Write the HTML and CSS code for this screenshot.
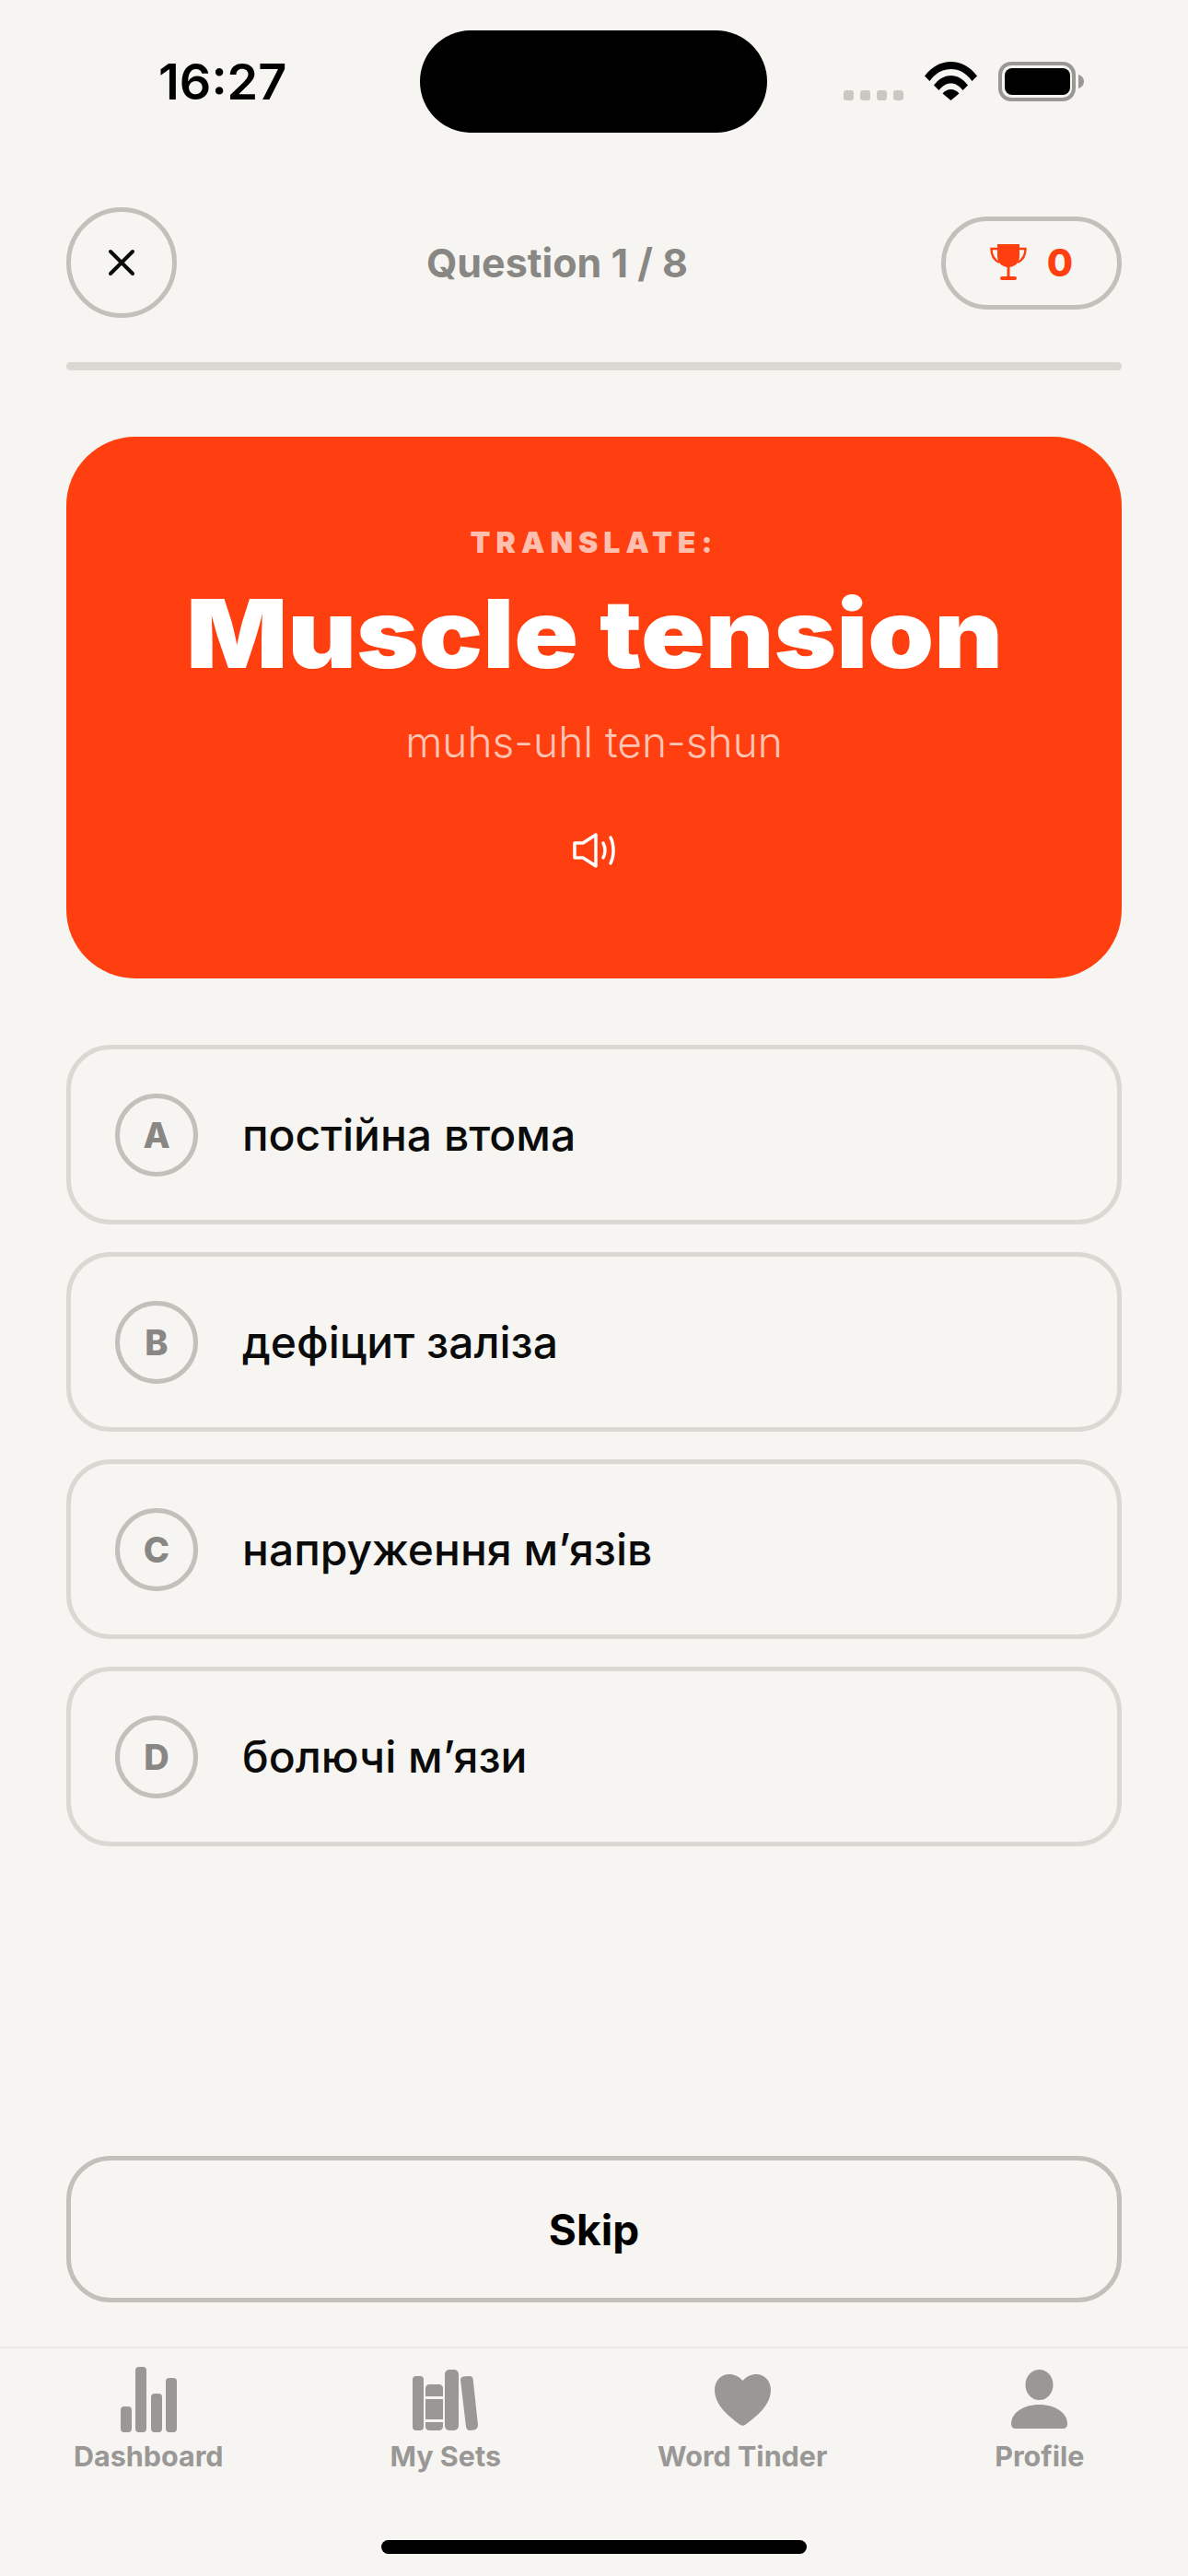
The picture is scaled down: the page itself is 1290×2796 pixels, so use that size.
FILE: index.html
```html
<!DOCTYPE html>
<html lang="uk">
<head>
    <meta charset="UTF-8">
    <meta name="viewport" content="width=device-width, initial-scale=1.0">
    <title>Quiz</title>
    <link rel="stylesheet" href="styles.css">
</head>
<body>
    <div class="page">
        <div class="status-bar">
            <span class="status-time">16:27</span>
            <div class="island"></div>
            <div class="status-icons">
                <div class="cell-dots"><i></i><i></i><i></i><i></i></div>
                <svg class="wifi" width="57" height="42" viewBox="0 0 57 42">
                    <path d="M0 15.5C7.5 5.5 17.5 0 28.5 0S49.500 5.500 57 15.500L51.500 21C45.500 12.500 37.500 8 28.500 8S11.500 12.500 5.500 21Z"/>
                    <path d="M10 25.500C15 19 21.500 15 28.500 15S42 19 47 25.500L41.500 31C37.500 26 33.500 23.500 28.500 23.500S19.500 26 15.500 31Z"/>
                    <path d="M19.500 34.500C22 31.500 25 30 28.500 30S35 31.500 37.500 34.500L28.500 42Z"/>
                </svg>
                <svg class="battery" width="93" height="43" viewBox="0 0 93 43">
                    <rect x="2" y="2" width="80" height="39" rx="12" fill="none" stroke="#999894" stroke-width="4"/>
                    <rect x="7" y="7" width="71" height="29" rx="8"/>
                    <path d="M87 14C90.500 15 93 18 93 21.500S90.500 28 87 29Z" fill="#999894"/>
                </svg>
            </div>
        </div>

        <main class="quiz">
            <div class="quiz-header">
                <button class="close-btn">
                    <svg width="30" height="30" viewBox="0 0 30 30" fill="none" stroke="#0b0b0b" stroke-width="4" stroke-linecap="round">
                        <path d="M3 3L27 27M27 3L3 27"/>
                    </svg>
                </button>
                <span class="question-count">Question 1 / 8</span>
                <div class="score-pill">
                    <svg width="40" height="40" viewBox="0 0 40 40" fill="#ff3f0f">
                        <path d="M8 0H32V13C32 20 27 25 20 25S8 20 8 13Z"/>
                        <path d="M18.500 23H21.500V36H18.500Z"/>
                        <rect x="11" y="35" width="18" height="4" rx="2"/>
                        <path d="M8 5H1.500C1.500 12 4 17 10 20M32 5H38.500C38.500 12 36 17 30 20" fill="none" stroke="#ff3f0f" stroke-width="2.500"/>
                    </svg>
                    <span class="score">0</span>
                </div>
            </div>

            <div class="progress"></div>

            <section class="word-card">
                <div class="word-label">TRANSLATE:</div>
                <h1 class="word-title">Muscle tension</h1>
                <div class="word-phonetic">muhs-uhl ten-shun</div>
                <svg class="speaker" width="46" height="38" viewBox="0 0 46 38" fill="none" stroke="#fff" stroke-width="3.500" stroke-linecap="round" stroke-linejoin="round">
                    <path d="M2 11H11L25 2V36L11 27H2Z"/>
                    <path d="M33 11C35.500 16 35.500 22 33 27"/>
                    <path d="M41 5C45 13 45 25 41 33"/>
                </svg>
            </section>

            <div class="options">
                <div class="option"><span class="option-letter">A</span><span class="option-text">постійна втома</span></div>
                <div class="option"><span class="option-letter">B</span><span class="option-text">дефіцит заліза</span></div>
                <div class="option"><span class="option-letter">C</span><span class="option-text">напруження мʼязів</span></div>
                <div class="option"><span class="option-letter">D</span><span class="option-text">болючі мʼязи</span></div>
            </div>

            <button class="skip-btn">Skip</button>
        </main>

        <nav class="tab-bar">
            <div class="tab">
                <svg width="61" height="71" viewBox="0 0 61 71" fill="#999896">
                    <rect x="0" y="43" width="12" height="28" rx="4"/>
                    <rect x="16" y="0" width="12" height="71" rx="4"/>
                    <rect x="33" y="29" width="12" height="42" rx="4"/>
                    <rect x="49" y="12" width="12" height="59" rx="4"/>
                </svg>
                <span>Dashboard</span>
            </div>
            <div class="tab">
                <svg width="71" height="71" viewBox="0 -3 71 71" fill="#999896">
                    <rect x="0" y="7" width="12" height="59" rx="4"/>
                    <path d="M14 20C14 18 16 16 18 16H29C31 16 33 18 33 20V29H14ZM14 32H33V54H14ZM14 57H33V62C33 64 31 66 29 66H18C16 66 14 64 14 62Z"/>
                    <rect x="35" y="0" width="15" height="66" rx="5"/>
                    <path d="M52 11C52 9 53.500 8 55 7.500L62 7C64 7 65.500 8.500 65.600 10L71 60C71 63 69.500 65 67 65.500L62 66C60 66 58.500 64.500 58 62Z"/>
                </svg>
                <span>My Sets</span>
            </div>
            <div class="tab">
                <svg width="61" height="71" viewBox="0 0 61 71" fill="#999896">
                    <path d="M30.500 7C26 2 21 0 16 0C7 0 0 7 0 17C0 34 17 47 28 55C29.500 56 31.500 56 33 55C44 47 61 34 61 17C61 7 54 0 45 0C40 0 35 2 30.500 7Z" transform="translate(0 8)"/>
                </svg>
                <span>Word Tinder</span>
            </div>
            <div class="tab">
                <svg width="61" height="71" viewBox="0 0 61 71" fill="#999896">
                    <ellipse cx="30.500" cy="19.500" rx="15" ry="16.500"/>
                    <path d="M30.500 41C13 41 0 50 0 62C0 65 2 67 5 67H56C59 67 61 65 61 62C61 50 48 41 30.500 41Z"/>
                </svg>
                <span>Profile</span>
            </div>
            <div class="home-bar"></div>
        </nav>
    </div>
</body>
</html>
```

FILE: styles.css
```css
* {
    margin: 0;
    padding: 0;
    box-sizing: border-box;
    font-family: Inter, 'Noto Sans', sans-serif;
}

body {
    background: #f6f5f1;
    width: 1290px;
}

.page {
    height: 2796px;
    display: flex;
    flex-direction: column;
    overflow: hidden;
}

/* Status bar */
.status-bar {
    height: 144px;
    padding-top: 33px;
    display: flex;
    align-items: center;
}

.status-time {
    width: 456px;
    padding-left: 172px;
    font-size: 54px;
    font-weight: 600;
    color: #000;
}

.island {
    width: 377px;
    height: 111px;
    border-radius: 56px;
    background: #000;
}

.status-icons {
    margin-left: 83px;
    display: flex;
    align-items: flex-start;
    margin-top: -1px;
}

.cell-dots {
    display: flex;
    gap: 7px;
    margin-top: 31px;
    margin-right: 23px;
}

.cell-dots i {
    width: 11px;
    height: 11px;
    border-radius: 3px;
    background: #c9c8c3;
}

.battery {
    margin-left: 23px;
}

/* Quiz */
.quiz {
    flex: 1;
    padding: 81px 72px 48px;
    display: flex;
    flex-direction: column;
}

.quiz-header {
    display: flex;
    align-items: center;
    justify-content: space-between;
}

.close-btn {
    width: 120px;
    height: 120px;
    border: 5px solid #c1c0ba;
    border-radius: 50%;
    background: none;
    display: flex;
    align-items: center;
    justify-content: center;
}

.question-count {
    margin-left: -4px;
    font-size: 43px;
    font-weight: 700;
    color: #888784;
}

.score-pill {
    width: 196px;
    height: 101px;
    border: 5px solid #c1c0ba;
    border-radius: 51px;
    display: flex;
    align-items: center;
    justify-content: center;
    gap: 22px;
}

.score {
    font-size: 41px;
    font-weight: 800;
    color: #ff3f0f;
}

.progress {
    height: 9px;
    margin-top: 48px;
    border-radius: 5px;
    background: #d9d8d3;
}

.word-card {
    height: 588px;
    margin-top: 72px;
    padding-top: 97px;
    border-radius: 75px;
    background: #ff3f0f;
    display: flex;
    flex-direction: column;
    align-items: center;
}

.word-label {
    font-size: 32px;
    font-weight: 900;
    letter-spacing: 6px;
    line-height: 36px;
    color: #ffbfae;
}

.word-title {
    margin-top: 21px;
    margin-left: 2px;
    font-size: 103px;
    font-weight: 900;
    line-height: 120px;
    color: #fff;
    transform: scaleX(1.118);
}

.word-phonetic {
    margin-top: 31px;
    font-size: 46px;
    font-weight: 300;
    line-height: 52px;
    color: #ffc4b4;
}

.speaker {
    margin-top: 73px;
}

.options {
    margin-top: 72px;
    display: flex;
    flex-direction: column;
    gap: 30px;
}

.option {
    height: 195px;
    padding-left: 48px;
    border: 5px solid #d9d8d3;
    border-radius: 48px;
    display: flex;
    align-items: center;
    gap: 48px;
}

.option-letter {
    width: 90px;
    height: 90px;
    border: 5px solid #c1c0ba;
    border-radius: 50%;
    display: flex;
    align-items: center;
    justify-content: center;
    font-size: 38px;
    font-weight: 800;
    color: #888784;
}

.option-text {
    font-size: 48px;
    font-weight: 500;
    color: #0b0b0b;
}

.skip-btn {
    margin-top: auto;
    height: 159px;
    border: 5px solid #c1c0ba;
    border-radius: 48px;
    background: none;
    font-size: 46px;
    font-weight: 700;
    color: #000;
}

/* Tab bar */
.tab-bar {
    position: relative;
    height: 249px;
    padding-top: 20px;
    border-top: 2px solid #e9e8e4;
    display: grid;
    grid-template-columns: repeat(4, 1fr);
    align-items: start;
}

.tab {
    display: flex;
    flex-direction: column;
    align-items: center;
    gap: 7px;
    font-size: 30.500px;
    font-weight: 700;
    color: #999896;
}

.home-bar {
    position: absolute;
    left: 414px;
    top: 208px;
    width: 462px;
    height: 15px;
    border-radius: 8px;
    background: #000;
}
```
